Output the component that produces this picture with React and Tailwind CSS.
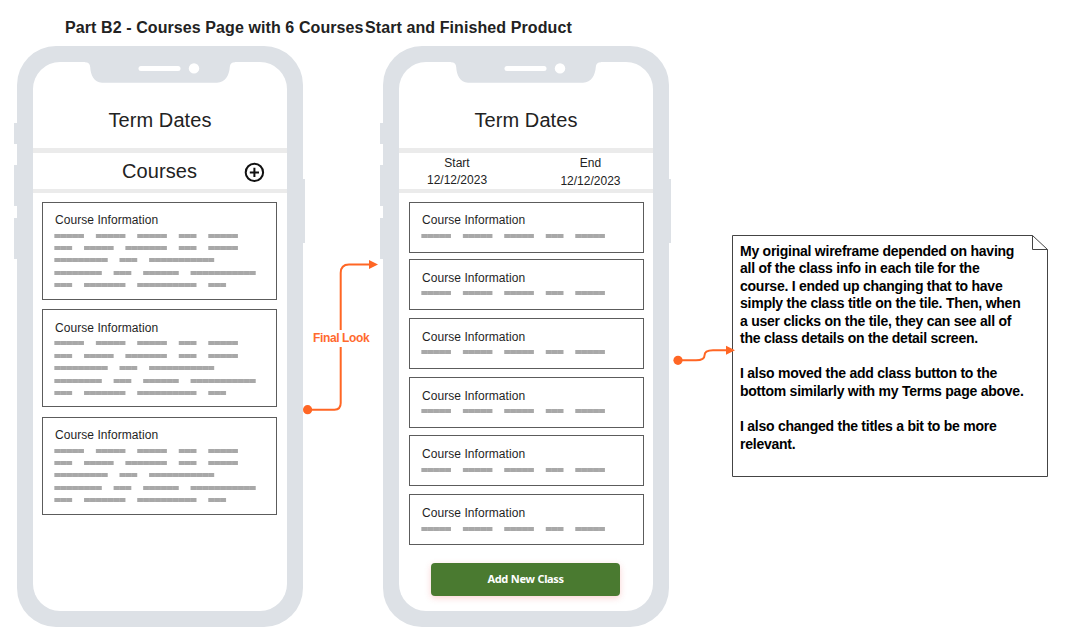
import React from 'react';

const LINES = [
  [5, 5, 5, 3, 5],
  [3, 5, 7, 3, 5],
  [9, 3, 11],
  [8, 3, 6, 11],
  [3, 7, 10, 3],
];
const CELL = 5.92;
const ROW_TOPS = [0, 12, 24, 37, 49];
const ROW_TOPS_LOW = [0, 13, 25, 38, 50];

// Placeholder copy: each word is a run of small grey cells.
function Placeholder({ rows, tops }) {
  return (
    <svg className="ml-[-1px] block" width="216" height={rows === 1 ? 6 : 54} aria-hidden="true">
      {LINES.slice(0, rows).map((words, r) => {
        let at = 0;
        const y = tops[r];
        return words.map((n, i) => {
          const start = at;
          at += n + 2;
          return (
            <g key={r + '-' + i}>
              <rect x={0.4 + start * CELL} y={y} width={n * CELL} height="4" fill="#b6b6b6" />
              {Array.from({ length: n }, (_, k) => (
                <rect key={k} x={0.7 + (start + k) * CELL} y={y} width="5.3" height="4" fill="#a8a8a8" />
              ))}
            </g>
          );
        });
      })}
    </svg>
  );
}

function CourseCard({ rows, tops = ROW_TOPS, className, textClass = 'pt-[10px] h-[31px]' }) {
  return (
    <div className={`w-[235px] shrink-0 border border-[#5c5c5c] pl-[12px] ${className}`}>
      <div className={`whitespace-nowrap text-[12px] leading-[16px] tracking-[0.06px] text-[#1f1f1f] ${textClass}`}>Course Information</div>
      <Placeholder rows={rows} tops={tops} />
    </div>
  );
}

function Phone({ children }) {
  return (
    <div className="relative h-[581px] w-[286px] shrink-0 rounded-[39px] bg-[#dde1e6] px-[16px] pt-[16px] pb-[16px]">
      <div className="absolute left-[-3px] top-[77px] h-[21px] w-[4px] bg-[#dde1e6]" />
      <div className="absolute left-[-3px] top-[119px] h-[41px] w-[4px] bg-[#dde1e6]" />
      <div className="absolute left-[-3px] top-[172px] h-[41px] w-[4px] bg-[#dde1e6]" />
      <div className="absolute right-[-2px] top-[133px] h-[64px] w-[4px] bg-[#dde1e6]" />
      <div className="flex h-[549px] w-[254px] flex-col rounded-[27px] bg-white">{children}</div>
      <svg className="absolute left-[68px] top-[15px]" width="150" height="23" viewBox="0 0 150 23" aria-hidden="true">
        <path d="M0 0V1.3C3.5 1.3 5 3 5.2 6C5.6 14 9 21.7 17 21.7H132C140.5 21.7 144.2 14 144.8 6C145 3 146.5 1.3 150 1.3V0Z" fill="#dde1e6" />
        <rect x="53.5" y="5" width="42" height="5" rx="2.5" fill="#fff" />
        <circle cx="109" cy="7.4" r="5.2" fill="#fff" />
      </svg>
    </div>
  );
}

function Heading() {
  return (
    <div className="flex h-[86px] shrink-0 items-end justify-center pb-[16px]">
      <span className="text-[20px] leading-[24px] tracking-[0.08px] text-[#222]">Term Dates</span>
    </div>
  );
}

function DateLabel({ label, dateClass = '' }) {
  return (
    <div className="flex flex-col items-center pt-[2px] text-[12px] text-[#222]">
      <span className="leading-[17px]">{label}</span>
      <span className={`leading-[16px] ${dateClass}`}>12/12/2023</span>
    </div>
  );
}

export default function App() {
  return (
    <div className="relative h-[643px] w-[1079px] overflow-hidden bg-white font-['Liberation_Sans',Arial,sans-serif]">
      <div className="flex h-[46px] pl-[65px] pt-[18px] text-[16px] font-bold leading-[20px] tracking-[0.09px] text-[#222]">
        <span className="w-[300px] whitespace-nowrap">Part B2 - Courses Page with 6 Courses</span>
        <span className="whitespace-nowrap">Start and Finished Product</span>
      </div>

      <div className="flex items-start pl-[17px]">
        <Phone>
          <Heading />
          <div className="flex h-[45px] shrink-0 items-center border-t-[5px] border-b-4 border-[#ebebeb]">
            <span className="ml-[89px] w-[75px] whitespace-nowrap text-[20px] leading-[24px] tracking-[0.08px] text-[#222]">Courses</span>
            <svg className="ml-[47px] mt-[3px]" width="21" height="21" viewBox="0 0 21 21" fill="none" stroke="#111" strokeWidth="2" aria-hidden="true">
              <circle cx="10.4" cy="10.4" r="8.7" />
              <path d="M10.4 5.8V15M5.8 10.4H15" />
            </svg>
          </div>
          <div className="flex flex-col items-start pl-[9px] pt-[9px]">
            <CourseCard rows={5} className="h-[98px]" textClass="pt-[9px] h-[31px]" />
            <CourseCard rows={5} tops={ROW_TOPS_LOW} className="mt-[9px] h-[98px]" />
            <CourseCard rows={5} className="mt-[10px] h-[98px]" textClass="pt-[9px] h-[31px]" />
          </div>
        </Phone>

        <div className="ml-[80px]">
          <Phone>
            <Heading />
            <div className="flex h-[45px] shrink-0 justify-between border-t-[5px] border-b-4 border-[#ebebeb] pl-[28px] pr-[32.5px]">
              <DateLabel label="Start" />
              <DateLabel label="End" dateClass="mt-px" />
            </div>
            <div className="flex flex-col items-start pl-[10px] pt-[9px]">
              <CourseCard rows={1} className="h-[51px]" textClass="pt-[9px] h-[31px]" />
              <CourseCard rows={1} className="mt-[6px] h-[51px]" />
              <CourseCard rows={1} className="mt-[8px] h-[51px]" />
              <CourseCard rows={1} className="mt-[8px] h-[51px]" />
              <CourseCard rows={1} className="mt-[7px] h-[51px]" textClass="pt-[10px] h-[32px]" />
              <CourseCard rows={1} className="mt-[8px] h-[51px]" textClass="pt-[10px] h-[32px]" />
            </div>
            <button className="ml-[32px] mt-[18px] h-[33px] w-[189px] shrink-0 rounded-[4px] bg-[#4a7a30] pb-px font-['Noto_Sans',sans-serif] text-[11px] font-bold leading-[32px] tracking-[-0.38px] text-white shadow-[0_2px_6px_rgba(240,80,80,0.25)] [word-spacing:0.6px]">
              Add New Class
            </button>
          </Phone>
        </div>

        <div className="relative ml-[63px] mt-[189px] h-[242px] w-[316px] shrink-0">
          <svg className="absolute inset-0" width="316" height="242" fill="none" stroke="#444" aria-hidden="true">
            <path d="M0.5 0.5H300.5L315.5 14.5V241.5H0.5Z" />
            <path d="M300.5 0.5V14.5H315.5" />
          </svg>
          <div className="relative whitespace-pre pl-[8px] pt-[7.5px] text-[14px] font-bold leading-[17.55px] tracking-[-0.245px] text-black">
            {`My original wireframe depended on having
all of the class info in each tile for the
course. I ended up changing that to have
simply the class title on the tile. Then, when
a user clicks on the tile, they can see all of
the class details on the detail screen.

I also moved the add class button to the
bottom similarly with my Terms page above.

I also changed the titles a bit to be more
relevant.`}
          </div>
        </div>
      </div>

      <svg className="pointer-events-none absolute left-0 top-0" width="1079" height="643" fill="none" stroke="#ff6624" strokeWidth="2" aria-hidden="true">
        <path d="M308 409.7H334.5Q340.7 409.7 340.7 403V347M340.7 330V273Q340.7 264.5 349 264.5H370" />
        <circle cx="307.6" cy="409.7" r="4.6" fill="#ff6624" stroke="none" />
        <path d="M369 260L378 264.5L369 269Z" fill="#ff6624" stroke="none" />
        <path d="M678 360.3H696Q704.5 360.3 704.5 355.5Q704.5 350.3 713 350.3H727" />
        <circle cx="678" cy="360.3" r="4.6" fill="#ff6624" stroke="none" />
        <path d="M726 345.8L735 350.3L726 354.8Z" fill="#ff6624" stroke="none" />
      </svg>
      <span className="absolute left-[313px] top-[330px] whitespace-nowrap text-[12px] font-bold leading-[16px] tracking-[-0.37px] text-[#ff6a2e]">Final Look</span>
    </div>
  );
}
